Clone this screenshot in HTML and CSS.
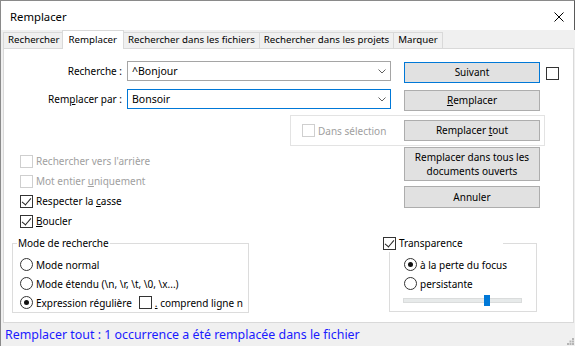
FILE: index.html
```html
<!DOCTYPE html>
<html lang="fr">
<head>
    <meta charset="UTF-8">
    <title>Remplacer</title>
    <link rel="stylesheet" href="styles.css">
</head>
<body>
    <div class="window">
        <div class="titlebar">
            <span class="title">Remplacer</span>
            <svg class="close" width="10" height="10" viewBox="0 0 10 10">
                <path d="M0.5 0.5 L9.5 9.5 M9.5 0.5 L0.5 9.5" stroke="#000" stroke-width="1"/>
            </svg>
        </div>

        <div class="tabs">
            <div class="tab">Rechercher</div>
            <div class="tab active">Remplacer</div>
            <div class="tab">Rechercher dans les fichiers</div>
            <div class="tab">Rechercher dans les projets</div>
            <div class="tab">Marquer</div>
        </div>

        <div class="panel">
            <div class="search-grid">
                <span class="field-label">Recherche :</span>
                <div class="combo">
                    <span>^Bonjour</span>
                    <svg class="chevron" width="8" height="5" viewBox="0 0 8 5"><path d="M0.5 0.5 L4 4 L7.5 0.5" fill="none" stroke="#606060"/></svg>
                </div>
                <button class="btn default">Suivant</button>
                <span class="box side-box"></span>

                <span class="field-label">Rem<u>p</u>lacer par :</span>
                <div class="combo focused">
                    <span>Bonsoir</span>
                    <svg class="chevron" width="8" height="5" viewBox="0 0 8 5"><path d="M0.5 0.5 L4 4 L7.5 0.5" fill="none" stroke="#606060"/></svg>
                </div>
                <button class="btn"><u>R</u>emplacer</button>
            </div>

            <div class="selection-group">
                <label class="check disabled"><span class="box"></span><span>Dans sélection</span></label>
                <button class="btn">Remplacer <u>t</u>out</button>
            </div>

            <div class="options">
                <div class="check-list">
                    <label class="check disabled"><span class="box"></span><span>Rechercher vers l'arrière</span></label>
                    <label class="check disabled"><span class="box"></span><span>Mot entier <u>u</u>niquement</span></label>
                    <label class="check"><span class="box checked"></span><span>Respecter la <u>c</u>asse</span></label>
                    <label class="check"><span class="box checked"></span><span><u>B</u>oucler</span></label>
                </div>
                <div class="btn-col">
                    <button class="btn tall">Remplacer dans tous les<br>documents ouverts</button>
                    <button class="btn">Annuler</button>
                </div>
            </div>

            <div class="modes">
                <div class="group mode-group">
                    <span class="group-title">Mode de recherche</span>
                    <label class="radio"><span class="dot"></span><span>Mode normal</span></label>
                    <label class="radio"><span class="dot"></span><span>Mode étendu (\n, \r, \t, \0, \x...)</span></label>
                    <div class="regex-row">
                        <label class="radio"><span class="dot on"></span><span>Expression régulière</span></label>
                        <label class="check newline"><span class="box"></span><span><u>.</u> comprend ligne nouvelle</span></label>
                    </div>
                </div>

                <div class="group transp-group">
                    <label class="group-title check"><span class="box checked"></span><span>Transparence</span></label>
                    <label class="radio"><span class="dot on"></span><span>à la perte du focus</span></label>
                    <label class="radio"><span class="dot"></span><span>persistante</span></label>
                    <div class="slider"><span class="thumb"></span></div>
                </div>
            </div>
        </div>

        <div class="status">
            <span>Remplacer tout : 1 occurrence a été remplacée dans le fichier</span>
            <svg class="grip" width="7" height="7" viewBox="0 0 7 7" fill="#b5b5b5">
                <rect x="5" y="0" width="2" height="2"/>
                <rect x="2.5" y="2.5" width="2" height="2"/><rect x="5" y="2.5" width="2" height="2"/>
                <rect x="0" y="5" width="2" height="2"/><rect x="2.5" y="5" width="2" height="2"/><rect x="5" y="5" width="2" height="2"/>
            </svg>
        </div>
    </div>
</body>
</html>
```

FILE: styles.css
```css
* {
    box-sizing: border-box;
}

body {
    margin: 0;
    font-family: "Noto Sans", sans-serif;
    font-size: 10px;
    color: #000;
    background-color: #f0f0f0;
}

.window {
    width: 575px;
    height: 346px;
    display: flex;
    flex-direction: column;
    background-color: #f0f0f0;
    border-left: 1px solid #8a8a8a;
    overflow: hidden;
}

/* title bar */
.titlebar {
    height: 30px;
    flex-shrink: 0;
    display: flex;
    align-items: center;
    justify-content: space-between;
    padding: 0 10px 0 9px;
    background-color: #fff;
    border-top: 1px solid #8a8a8a;
    border-right: 1px solid #5a5a5a;
}

.title {
    font-size: 11.3px;
    margin-top: 1px;
}

.close {
    display: block;
    margin-top: 2px;
}

/* tabs */
.tabs {
    height: 18px;
    flex-shrink: 0;
    display: flex;
    align-items: flex-end;
    padding-left: 2px;
    font-size: 9.7px;
}

.tab {
    height: 16px;
    line-height: 14px;
    padding: 0 4px;
    border: 1px solid #d9d9d9;
    border-bottom: none;
    margin-right: -1px;
    background-color: #f0f0f0;
    white-space: nowrap;
}

.tab.active {
    height: 19px;
    line-height: 17px;
    margin: 0 -1px -1px -2px;
    padding: 0 6px;
    background-color: #fff;
    position: relative;
    z-index: 1;
}

/* main panel */
.panel {
    flex: 1;
    margin: 0 1px 0 2px;
    background-color: #fff;
    border: 1px solid #d9d9d9;
    padding-top: 12px;
}

.search-grid {
    display: grid;
    grid-template-columns: 123px 264px 149px 20px;
    grid-auto-rows: 22px;
    row-gap: 6px;
}

.field-label {
    text-align: right;
    padding-right: 5px;
    line-height: 20px;
}

.combo {
    height: 20px;
    display: flex;
    align-items: center;
    justify-content: space-between;
    padding: 0 4px 0 4px;
    border: 1px solid #a5a5a5;
    background-color: #fff;
    font-size: 10.5px;
}

.combo.focused {
    border-color: #0078d7;
}

.chevron {
    display: block;
}

.btn {
    font-family: inherit;
    font-size: 10px;
    color: #000;
    width: 136px;
    height: 21px;
    padding: 0;
    line-height: 17px;
    background-color: #e1e1e1;
    border: 1px solid #adadad;
}

.search-grid .btn {
    justify-self: end;
    margin-top: 1px;
}

.btn.default {
    border-color: #0078d7;
}

.side-box {
    margin: 6px 0 0 6px;
}

/* check boxes and radios */
.box {
    width: 13px;
    height: 13px;
    flex-shrink: 0;
    display: inline-block;
    border: 1px solid #333;
    background-color: #fff;
    position: relative;
}

.box.checked::after {
    content: "";
    position: absolute;
    left: 3px;
    top: 0px;
    width: 4px;
    height: 8px;
    border: solid #222;
    border-width: 0 1px 1px 0;
    transform: rotate(40deg);
}

.check,
.radio {
    display: flex;
    align-items: center;
    gap: 3px;
    height: 20px;
    white-space: nowrap;
}

.check.disabled {
    color: #a0a0a0;
}

.check.disabled .box {
    border-color: #cfcfcf;
}

.dot {
    width: 13px;
    height: 13px;
    flex-shrink: 0;
    border: 1px solid #333;
    border-radius: 50%;
    background-color: #fff;
    position: relative;
}

.dot.on::after {
    content: "";
    position: absolute;
    left: 3px;
    top: 3px;
    width: 5px;
    height: 5px;
    border-radius: 50%;
    background-color: #111;
}

/* "Dans sélection" box */
.selection-group {
    width: 255px;
    height: 31px;
    margin: 4px 0 0 286px;
    padding: 0 4px 0 11px;
    display: flex;
    align-items: center;
    justify-content: space-between;
    border: 1px solid #e3e3e3;
}

/* options */
.options {
    display: grid;
    grid-template-columns: 400px 136px;
    margin-top: 1px;
}

.check-list {
    padding: 4px 0 0 16px;
}

.btn-col {
    display: flex;
    flex-direction: column;
    gap: 5px;
}

.btn.tall {
    height: 34px;
    line-height: 14px;
}

.btn-col .btn:last-child {
    height: 22px;
}

/* group boxes */
.modes {
    display: flex;
    align-items: flex-start;
    margin-top: 12px;
    padding-left: 8px;
}

.group {
    position: relative;
    border: 1px solid #dcdcdc;
    padding-top: 11px;
}

.group .radio {
    height: 19px;
}

.group-title {
    position: absolute;
    top: -9px;
    left: 4px;
    padding: 0 1px;
    line-height: 16px;
    background-color: #fff;
}

.mode-group {
    width: 237px;
    height: 70px;
    padding-left: 7px;
}

.regex-row {
    display: flex;
    align-items: center;
    gap: 7px;
    width: 223px;
    overflow: hidden;
}

.regex-row .check {
    height: 19px;
}

.transp-group {
    width: 148px;
    height: 69px;
    margin-left: 140px;
    padding-left: 14px;
}

.transp-group .group-title {
    left: -7px;
    top: -10px;
    width: 120px;
    height: 18px;
    padding: 0;
}

.slider {
    position: relative;
    width: 119px;
    height: 5px;
    margin: 5px 0 0 -1px;
    background-color: #e7eaea;
    border: 1px solid #dadcdc;
}

.thumb {
    position: absolute;
    left: 80px;
    top: -4px;
    width: 6px;
    height: 11px;
    background-color: #0078d7;
}

/* status bar */
.status {
    height: 23px;
    flex-shrink: 0;
    display: flex;
    align-items: center;
    justify-content: space-between;
    padding: 0 1px 0 4px;
    font-size: 12.4px;
    color: #1a1aff;
}

.grip {
    display: block;
    align-self: flex-end;
    margin-bottom: 1px;
}
```
